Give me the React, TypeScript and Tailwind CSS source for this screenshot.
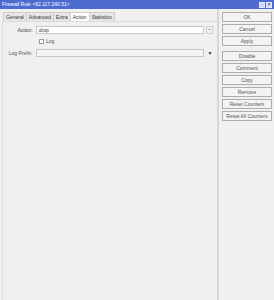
import React from "react";

const tabs = ["General", "Advanced", "Extra", "Action", "Statistics"];
const buttons = ["OK", "Cancel", "Apply", null, "Disable", "Comment", "Copy", "Remove", "Reset Counters", "Reset All Counters"];

export default function App() {
  return (
    <div className="w-[274px] h-[300px] bg-[#f0f0f0] flex flex-col overflow-hidden text-[5px] leading-none text-[#333] whitespace-nowrap" style={{ fontFamily: '"Liberation Sans", Arial, sans-serif' }}>
      {/* title bar */}
      <div className="h-[9px] bg-[#4e6bd1] flex items-center px-[2px] text-white">
        <span className="flex-1">Firewall Rule &lt;82.117.240.51&gt;</span>
        <div className="flex gap-px">
          <div className="w-[6px] h-[6px] border border-[#dfe6fb] bg-[#cfd9f6]" />
          <div className="w-[6px] h-[6px] border border-[#dfe6fb] bg-[#cfd9f6] flex items-center justify-center text-[5px] text-[#334]">×</div>
        </div>
      </div>

      <div className="flex-1 flex">
        {/* left side */}
        <div className="w-[219px] flex flex-col border-r-2 border-[#d6d6d6]">
          <div className="flex pl-[3px] pt-[3px]">
            {tabs.map((t) => (
              <div
                key={t}
                className={
                  "h-[9px] px-[2px] flex items-center border border-b-0 border-r-0 last:border-r border-[#cfcfcf] " +
                  (t === "Action" ? "bg-white" : "bg-[#e6e6e6]")
                }
              >
                {t}
              </div>
            ))}
          </div>
          <div className="flex-1 ml-[2px] border-l border-t border-[#dcdcdc] pt-[4px] pr-[4px] flex flex-col gap-[4px]">
            <div className="flex items-center">
              <span className="w-[33px] text-right pr-[3px] text-[#444]">Action:</span>
              <div className="w-[170px] h-[8px] bg-white border border-[#c8c8c8] flex items-center px-[2px]">drop</div>
              <div className="ml-[2px] w-[7px] h-[8px] border border-[#d0d0d0] flex items-center justify-center text-[4px] text-[#555]">▪</div>
            </div>
            <div className="flex items-center pl-[36px] h-[7px]">
              <div className="w-[5px] h-[5px] border border-[#9a9a9a] bg-white" />
              <span className="ml-[2px] text-[#555]">Log</span>
            </div>
            <div className="flex items-center">
              <span className="w-[33px] text-right pr-[3px] text-[#555]">Log Prefix:</span>
              <div className="w-[170px] h-[8px] bg-[#f3f3f3] border border-[#c8c8c8]" />
              <div className="ml-[3px] w-[6px] flex items-center justify-center text-[5px] text-[#333]">▼</div>
            </div>
          </div>
        </div>

        {/* right side buttons */}
        <div className="flex-1 flex flex-col pl-[3px] pt-[3px] gap-[2px]">
          {buttons.map((b, i) =>
            b === null ? (
              <div key={i} className="h-px" />
            ) : (
              <div key={i} className="w-[50px] h-[10px] border border-[#adadad] bg-[#f3f3f3] flex items-center justify-center text-[#555]">
                {b}
              </div>
            )
          )}
        </div>
      </div>
    </div>
  );
}
